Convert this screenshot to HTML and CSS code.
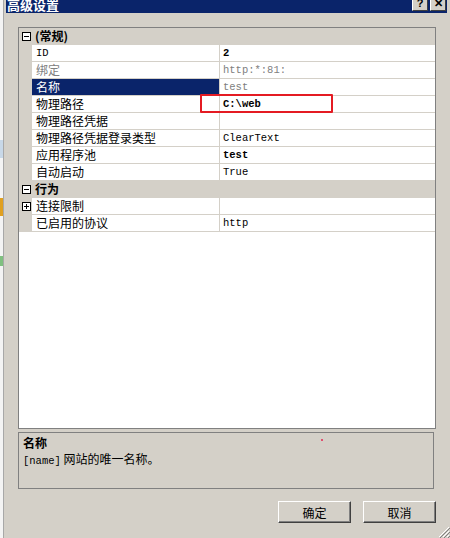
FILE: index.html
```html
<!DOCTYPE html>
<html lang="zh-CN">
<head>
    <meta charset="UTF-8">
    <title>高级设置</title>
    <link rel="stylesheet" href="styles.css">
</head>
<body>
    <!-- window behind the dialog -->
    <div class="behind">
        <span class="behind-icon blue"></span>
        <span class="behind-icon gold"></span>
        <span class="behind-icon green"></span>
    </div>

    <div class="dialog">
        <div class="titlebar">
            <span class="title">高级设置</span>
            <div class="title-btns">
                <span class="title-btn">?</span>
                <span class="title-btn">✕</span>
            </div>
        </div>

        <div class="content">
            <!-- Property grid -->
            <div class="grid">
                <div class="row cat">
                    <span class="gutter"><span class="toggle minus"></span></span>
                    <span class="cat-name">(常规)</span>
                </div>
                <div class="row">
                    <span class="gutter"></span>
                    <span class="name mono">ID</span>
                    <span class="value mono bold">2</span>
                </div>
                <div class="row readonly">
                    <span class="gutter"></span>
                    <span class="name">绑定</span>
                    <span class="value mono">http:*:81:</span>
                </div>
                <div class="row selected readonly">
                    <span class="gutter"></span>
                    <span class="name">名称</span>
                    <span class="value mono">test</span>
                </div>
                <div class="row">
                    <span class="gutter"></span>
                    <span class="name">物理路径</span>
                    <span class="value mono bold">C:\web</span>
                </div>
                <div class="row">
                    <span class="gutter"></span>
                    <span class="name">物理路径凭据</span>
                    <span class="value mono"></span>
                </div>
                <div class="row">
                    <span class="gutter"></span>
                    <span class="name">物理路径凭据登录类型</span>
                    <span class="value mono">ClearText</span>
                </div>
                <div class="row">
                    <span class="gutter"></span>
                    <span class="name">应用程序池</span>
                    <span class="value mono bold">test</span>
                </div>
                <div class="row">
                    <span class="gutter"></span>
                    <span class="name">自动启动</span>
                    <span class="value mono">True</span>
                </div>
                <div class="row cat">
                    <span class="gutter"><span class="toggle minus"></span></span>
                    <span class="cat-name">行为</span>
                </div>
                <div class="row">
                    <span class="gutter"><span class="toggle plus"></span></span>
                    <span class="name">连接限制</span>
                    <span class="value mono"></span>
                </div>
                <div class="row">
                    <span class="gutter"></span>
                    <span class="name">已启用的协议</span>
                    <span class="value mono">http</span>
                </div>

                <div class="highlight"></div>
            </div>

            <!-- Description -->
            <div class="desc">
                <div class="desc-title">名称</div>
                <div class="desc-text"><span class="mono">[name]</span> 网站的唯一名称。</div>
                <span class="dot"></span>
            </div>

            <div class="buttons">
                <button class="btn">确定</button>
                <button class="btn">取消</button>
            </div>
        </div>

        <svg class="grip" width="12" height="12" viewBox="0 0 12 12">
            <path d="M11 1 L1 11 M11 5 L5 11 M11 9 L9 11" stroke="#fff" stroke-width="1"/>
            <path d="M12 2 L2 12 M12 6 L6 12 M12 10 L10 12" stroke="#808080" stroke-width="1"/>
        </svg>
    </div>
</body>
</html>
```

FILE: styles.css
```css
:root {
    --face: #d4d0c8;
    --navy: #0a246a;
    --shadow: #808080;
    --line: #d4d0c8;
}

body {
    margin: 0;
    width: 450px;
    height: 538px;
    overflow: hidden;
    display: flex;
    background: var(--face);
    font-family: "Noto Sans CJK SC", sans-serif;
    font-size: 12px;
    color: #000;
}

.mono {
    font-family: "Liberation Mono", monospace;
    font-size: 10.5px;
}

.bold {
    font-weight: bold;
}

/* Window behind */
.behind {
    width: 4px;
    flex: none;
    background: #f4f4f4;
    border-right: 1px solid #a8a8a8;
    display: flex;
    flex-direction: column;
    gap: 40px;
    padding-top: 140px;
    box-sizing: border-box;
}

.behind-icon {
    display: block;
    height: 18px;
}

.behind-icon.blue { background: #c8d8e8; }
.behind-icon.gold { background: #e0a020; }
.behind-icon.green { background: #80c080; height: 10px; }

/* Dialog */
.dialog {
    position: relative;
    flex: 1;
    padding: 0 3px 0 2px;
    display: flex;
    flex-direction: column;
}

.titlebar {
    height: 13px;
    background: var(--navy);
    color: #fff;
    display: flex;
    justify-content: space-between;
    overflow: hidden;
}

.title {
    font-weight: bold;
    font-size: 13px;
    line-height: 10px;
    padding-left: 1px;
}

.title-btns {
    display: flex;
    gap: 2px;
    margin-top: -4px;
    padding-right: 1px;
}

.title-btn {
    width: 14px;
    height: 13px;
    background: var(--face);
    color: #000;
    border-top: 1px solid #fff;
    border-left: 1px solid #fff;
    border-right: 1px solid #404040;
    border-bottom: 1px solid #404040;
    font-family: "Liberation Sans", sans-serif;
    font-weight: bold;
    font-size: 11px;
    line-height: 13px;
    text-align: center;
}

.content {
    padding: 14px 10px 0 12px;
    display: flex;
    flex-direction: column;
}

/* Property grid */
.grid {
    position: relative;
    width: 416px;
    height: 400px;
    border: 1px solid var(--shadow);
    background: #fff;
}

.row {
    display: flex;
    height: 17px;
}

.gutter {
    width: 13px;
    flex: none;
    background: var(--face);
    display: flex;
    align-items: center;
    justify-content: center;
}

.toggle {
    position: relative;
    width: 7px;
    height: 7px;
    border: 1px solid #000;
    background: #fff;
    margin-left: 2px;
}

.toggle::before {
    content: "";
    position: absolute;
    left: 1px;
    top: 3px;
    width: 5px;
    height: 1px;
    background: #000;
}

.toggle.plus::after {
    content: "";
    position: absolute;
    left: 3px;
    top: 1px;
    width: 1px;
    height: 5px;
    background: #000;
}

.name,
.value {
    height: 16px;
    line-height: 16px;
    border-bottom: 1px solid var(--line);
    white-space: nowrap;
    overflow: hidden;
}

.name {
    width: 183px;
    padding-left: 4px;
    border-right: 1px solid var(--line);
}

.value {
    flex: 1;
    padding-left: 3px;
}

.readonly .name,
.readonly .value {
    color: var(--shadow);
}

.selected .name {
    background: var(--navy);
    color: #fff;
}

.row.cat {
    background: var(--face);
    border-bottom: 1px solid var(--face);
    box-sizing: border-box;
}

.cat-name {
    padding-left: 3px;
    font-weight: bold;
    line-height: 16px;
}

/* red annotation over the path row */
.highlight {
    position: absolute;
    left: 181px;
    top: 66px;
    width: 129px;
    height: 15px;
    border: 2px solid #e41b23;
    border-radius: 1px;
}

/* Description box */
.desc {
    position: relative;
    margin-top: 3px;
    width: 410px;
    height: 53px;
    border: 1px solid var(--shadow);
    padding: 2px 0 0 4px;
}

.desc-title {
    font-weight: bold;
    line-height: 15px;
}

.desc-text {
    line-height: 17px;
}

.dot {
    position: absolute;
    left: 302px;
    top: 6px;
    width: 2px;
    height: 2px;
    background: #e05070;
}

/* Buttons */
.buttons {
    display: flex;
    justify-content: flex-end;
    gap: 12px;
    margin-top: 12px;
    width: 418px;
}

.btn {
    width: 73px;
    height: 22px;
    padding: 0;
    background: var(--face);
    font-family: "Noto Sans CJK SC", sans-serif;
    font-size: 12px;
    color: #000;
    border-top: 1px solid #fff;
    border-left: 1px solid #fff;
    border-right: 1px solid #404040;
    border-bottom: 1px solid #404040;
    box-shadow: inset -1px -1px 0 var(--shadow);
}

.grip {
    position: absolute;
    right: 0;
    bottom: 0;
}
```
